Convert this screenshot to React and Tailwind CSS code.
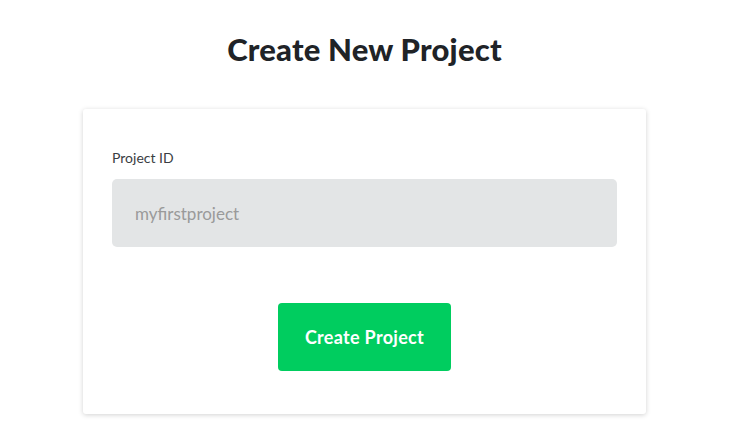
export default function App() {
  return (
    <main
      className="flex min-h-screen justify-center bg-white pr-px text-[#23262b]"
      style={{ fontFamily: "Lato, 'Noto Sans', sans-serif" }}
    >
      <div className="flex w-[563px] flex-col pt-[30px]">
        <h1 className="text-center text-[31px] font-black leading-[38px] tracking-[0.2px] text-[#202327]">
          Create New Project
        </h1>

        <div className="mt-[41px] rounded-[3px] bg-white px-[29px] pb-[43px] pt-[40px] shadow-[0_1px_5px_rgba(0,0,0,0.18)]">
          <label className="block text-[14px] leading-[18px] text-[#3a3d42]">
            Project ID
          </label>
          <input
            type="text"
            placeholder="myfirstproject"
            className="mt-[12px] h-[68px] w-full rounded-[5px] bg-[#e3e5e6] px-[23px] text-[17px] text-[#333] outline-none placeholder:text-[#9a9a9a]"
          />
          <div className="mt-[56px] flex justify-center">
            <button
              type="button"
              className="h-[68px] w-[173px] rounded-[4px] bg-[#00cd5f] text-[18px] font-bold tracking-[0.3px] text-white"
            >
              Create Project
            </button>
          </div>
        </div>
      </div>
    </main>
  );
}
